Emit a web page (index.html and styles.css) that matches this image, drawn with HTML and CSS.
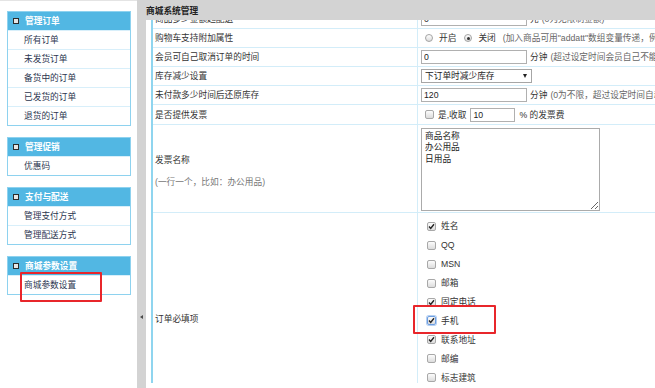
FILE: index.html
```html
<!DOCTYPE html>
<html lang="zh-CN">
<head>
<meta charset="utf-8">
<title>商城系统管理</title>
<link rel="stylesheet" href="styles.css">
</head>
<body>
<div class="app">
  <aside class="sidebar">
    <section class="panel">
      <h3 class="panel-head"><span class="ico"></span>管理订单</h3>
      <ul class="panel-list">
        <li>所有订单</li>
        <li>未发货订单</li>
        <li>备货中的订单</li>
        <li>已发货的订单</li>
        <li>退货的订单</li>
      </ul>
    </section>
    <section class="panel">
      <h3 class="panel-head"><span class="ico"></span>管理促销</h3>
      <ul class="panel-list">
        <li>优惠码</li>
      </ul>
    </section>
    <section class="panel">
      <h3 class="panel-head"><span class="ico"></span>支付与配送</h3>
      <ul class="panel-list">
        <li>管理支付方式</li>
        <li>管理配送方式</li>
      </ul>
    </section>
    <section class="panel">
      <h3 class="panel-head"><span class="ico"></span>商城参数设置</h3>
      <ul class="panel-list">
        <li>商城参数设置</li>
      </ul>
    </section>
  </aside>

  <div class="toggle"><span class="arrow"></span></div>

  <main class="main">
    <div class="main-head">商城系统管理</div>
    <div class="main-body">
      <div class="form">
        <div class="row">
          <div class="label">商品多少金额起配送</div>
          <div class="value"><input class="inp w106" value="0" readonly><span class="unit">元</span><span class="hint">(0为无限制金额)</span></div>
        </div>
        <div class="row">
          <div class="label">购物车支持附加属性</div>
          <div class="value">
            <span class="radio first"></span><span class="rtxt">开启</span>
            <span class="radio on"></span><span class="rtxt">关闭</span>
            <span class="hint h2">(加入商品可用"addatt"数组变量传递，例如：addatt[颜色]=红色)</span>
          </div>
        </div>
        <div class="row">
          <div class="label">会员可自己取消订单的时间</div>
          <div class="value"><input class="inp w106" value="0" readonly><span class="unit">分钟</span><span class="hint">(超过设定时间会员自己不能取消订单)</span></div>
        </div>
        <div class="row">
          <div class="label">库存减少设置</div>
          <div class="value"><div class="sel"><span>下订单时减少库存</span><span class="caret"></span></div></div>
        </div>
        <div class="row">
          <div class="label">未付款多少时间后还原库存</div>
          <div class="value"><input class="inp w106" value="120" readonly><span class="unit">分钟</span><span class="hint">(0为不限，超过设定时间自动还原库存)</span></div>
        </div>
        <div class="row row-inv">
          <div class="label">是否提供发票</div>
          <div class="value"><span class="cb first"></span><span class="ctxt">是,收取</span><input class="inp w45" value="10" readonly><span class="ctxt">% 的发票费</span></div>
        </div>
        <div class="row row-ta">
          <div class="label label-stack"><span>发票名称</span><span class="sub">(一行一个，比如：办公用品)</span></div>
          <div class="value value-ta"><textarea class="ta" readonly>商品名称
办公用品
日用品</textarea></div>
        </div>
        <div class="row row-list">
          <div class="label">订单必填项</div>
          <div class="value value-list">
            <div class="opt"><span class="cb on"><svg viewBox="0 0 7 7"><path d="M1 3.6 L2.7 5.4 L6 1.2"/></svg></span>姓名</div>
            <div class="opt"><span class="cb"></span>QQ</div>
            <div class="opt"><span class="cb"></span>MSN</div>
            <div class="opt"><span class="cb"></span>邮箱</div>
            <div class="opt"><span class="cb on"><svg viewBox="0 0 7 7"><path d="M1 3.6 L2.7 5.4 L6 1.2"/></svg></span>固定电话</div>
            <div class="opt"><span class="cb on focus"><svg viewBox="0 0 7 7"><path d="M1 3.6 L2.7 5.4 L6 1.2"/></svg></span>手机</div>
            <div class="opt"><span class="cb on"><svg viewBox="0 0 7 7"><path d="M1 3.6 L2.7 5.4 L6 1.2"/></svg></span>联系地址</div>
            <div class="opt"><span class="cb"></span>邮编</div>
            <div class="opt"><span class="cb"></span>标志建筑</div>
            <div class="opt"><span class="cb"></span>送货时间</div>
            <div class="opt"><span class="cb"></span>订单附言</div>
          </div>
        </div>
      </div>
    </div>
  </main>

  <div class="mark mark-side"></div>
  <div class="mark mark-phone"></div>
</div>
</body>
</html>
```

FILE: styles.css
```css
* { box-sizing: border-box; margin: 0; padding: 0; }
html, body { width: 655px; height: 388px; overflow: hidden; background: #fff; }
body {
  font-family: "Liberation Sans", "Noto Sans CJK SC", sans-serif;
  font-size: 8.7px;
  color: #333;
  line-height: 12px;
}
.app { position: relative; display: flex; height: 388px; }

/* sidebar */
.sidebar {
  width: 137px;
  flex: none;
  padding: 10px 0 0 7px;
  border-top: 1px solid #e4e4e4;
  display: flex;
  flex-direction: column;
  gap: 11px;
}
.panel { width: 124px; border: 1px solid #8ed2ef; }
.panel-head {
  height: 18px;
  background: #52b7e3;
  color: #fff;
  font-size: 8.7px;
  font-weight: bold;
  display: flex;
  align-items: center;
  gap: 6px;
  padding-left: 5px;
}
.ico {
  width: 6px;
  height: 6px;
  border: 1.5px solid #2b2b2b;
  background: #e6e6e6;
  flex: none;
}
.panel-list { list-style: none; }
.panel-list li {
  height: 19px;
  line-height: 19px;
  border-top: 1px solid #d8effa;
  padding-left: 16px;
  color: #2c3650;
}

/* toggle bar */
.toggle {
  width: 9px;
  flex: none;
  background: #d3d3d3;
  display: flex;
  flex-direction: column;
  align-items: center;
  padding-top: 315px;
}
.arrow {
  width: 0;
  height: 0;
  border-top: 2.5px solid transparent;
  border-bottom: 2.5px solid transparent;
  border-right: 3px solid #4a4a4a;
}

/* main */
.main { flex: 1; display: flex; flex-direction: column; overflow: hidden; }
.main-head {
  height: 20px;
  flex: none;
  background: #d3d3d3;
  line-height: 22px;
  font-weight: bold;
  color: #222;
  white-space: nowrap;
}
.main-body { height: 363px; flex: none; overflow: hidden; padding-left: 5px; }
.form {
  width: 720px;
  margin-top: -10px;
  border-left: 2px solid #8fd5ef;
}
.row {
  display: grid;
  grid-template-columns: 265px 1fr;
  height: 19px;
  border-bottom: 1px solid #d3edf9;
}
.row-inv { height: 20px; }
.row-ta { height: 88px; }
.row-list { height: 212px; }
.label {
  border-right: 1px solid #d3edf9;
  padding-left: 2px;
  display: flex;
  align-items: center;
  white-space: nowrap;
  color: #333;
}
.label-stack {
  flex-direction: column;
  align-items: flex-start;
  justify-content: center;
  gap: 10px;
  line-height: 12px;
  padding-top: 4px;
}
.label-stack .sub { color: #777; }
.value {
  padding-left: 3px;
  display: flex;
  align-items: center;
  white-space: nowrap;
}
.inp {
  height: 14px;
  border: 1px solid #b0b0b0;
  font-family: inherit;
  font-size: 8.7px;
  color: #222;
  padding: 0 2px;
  background: #fff;
  outline: none;
}
.w106 { width: 106px; }
.w45 { width: 45px; }
.unit { margin-left: 3px; color: #333; }
.hint { margin-left: 3px; color: #666; }
.h2 { margin-left: 7px; }

.radio {
  width: 8px;
  height: 8px;
  border-radius: 50%;
  border: 1px solid #a3a3a3;
  background: linear-gradient(#ffffff, #dcdcdc);
  display: inline-flex;
  align-items: center;
  justify-content: center;
  flex: none;
  margin-left: 8px;
}
.radio.first { margin-left: 4px; }
.radio.on::after {
  content: "";
  width: 3px;
  height: 3px;
  border-radius: 50%;
  background: #333;
}
.rtxt { margin-left: 6px; }

.sel {
  width: 111px;
  height: 14px;
  border: 1px solid #a6a6a6;
  background: #fff;
  display: flex;
  align-items: center;
  justify-content: space-between;
  padding: 0 4px 0 3px;
  color: #222;
}
.caret {
  width: 0;
  height: 0;
  border-left: 2.5px solid transparent;
  border-right: 2.5px solid transparent;
  border-top: 4px solid #222;
}

.cb {
  width: 9px;
  height: 9px;
  border: 1px solid #a8a8a8;
  border-radius: 2px;
  background: linear-gradient(#fcfcfc, #dcdcdc);
  flex: none;
  display: inline-flex;
}
.cb svg { width: 7px; height: 7px; }
.cb path { fill: none; stroke: #222; stroke-width: 1.4; }
.cb.focus { border-color: #6c9de0; box-shadow: 0 0 0 1px #b4cff2; }
.cb.first { margin-left: 4px; }
.ctxt { margin: 0 4px; }

.value-ta { align-items: flex-start; padding-top: 3px; }
.ta {
  width: 179px;
  height: 83px;
  border: 1px solid #ababab;
  font-family: inherit;
  font-size: 8.7px;
  line-height: 11.3px;
  padding: 2px 3px;
  color: #222;
  resize: both;
  outline: none;
  overflow: hidden;
}

.value-list { flex-direction: column; align-items: stretch; padding-top: 4px; }
.opt {
  height: 18.9px;
  flex: none;
  display: flex;
  align-items: center;
  gap: 5px;
  padding-left: 6px;
  color: #333;
}

/* annotation boxes */
.mark {
  position: absolute;
  border: 2px solid #e8262b;
  border-radius: 1px;
}
.mark-side { left: 20px; top: 272px; width: 82px; height: 30px; }
.mark-phone { left: 413px; top: 305px; width: 83px; height: 29px; }
```
